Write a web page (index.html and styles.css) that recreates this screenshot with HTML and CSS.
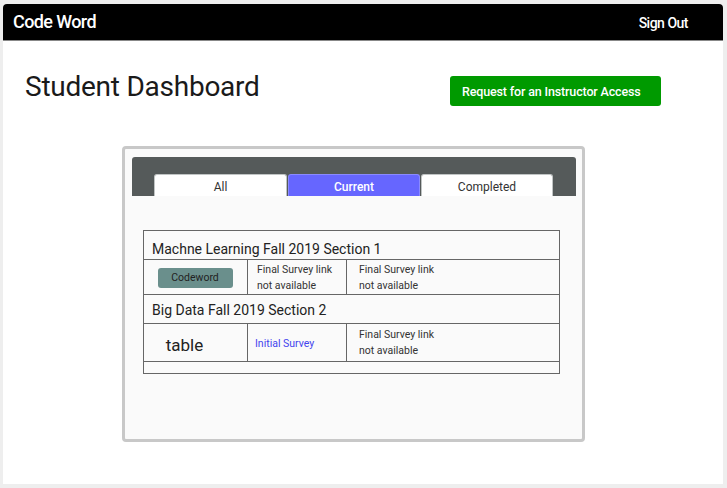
FILE: index.html
```html
<!DOCTYPE html>
<html>
<head>
<meta charset="utf-8">
<link rel="stylesheet" href="styles.css">
</head>
<body>
<div class="panel">
  <header class="topbar">
    <span class="brand">Code Word</span>
    <span class="signout">Sign Out</span>
  </header>
  <div class="titlerow">
    <h1 class="title">Student Dashboard</h1>
    <button class="request">Request for an Instructor Access</button>
  </div>
  <div class="card">
    <div class="tabbar">
      <div class="tab">All</div>
      <div class="tab active">Current</div>
      <div class="tab">Completed</div>
    </div>
    <table class="courses">
      <colgroup>
        <col class="col1">
        <col class="col2">
        <col class="col3">
      </colgroup>
      <tr class="course-title first"><td colspan="3">Machne Learning Fall 2019 Section 1</td></tr>
      <tr class="course-row r1">
        <td class="c1"><span class="codeword">Codeword</span></td>
        <td class="c2 small">Final Survey link<br>not available</td>
        <td class="c3 small">Final Survey link<br>not available</td>
      </tr>
      <tr class="course-title second"><td colspan="3">Big Data Fall 2019 Section 2</td></tr>
      <tr class="course-row r2">
        <td class="c1"><span class="tabletext">table</span></td>
        <td class="c2"><a class="link">Initial Survey</a></td>
        <td class="c3 small">Final Survey link<br>not available</td>
      </tr>
      <tr class="empty-row"><td colspan="3"></td></tr>
    </table>
  </div>
</div>
</body>
</html>
```
FILE: styles.css
```css
html, body {
  margin: 0;
  padding: 0;
}
body {
  background: #eeeeee;
  padding: 4px 4px 4px 3px;
  font-family: Roboto, "Liberation Sans", sans-serif;
  color: #222;
}
.panel {
  width: 720px;
  height: 480px;
  background: #ffffff;
  box-sizing: border-box;
  border-radius: 3px 3px 0 0;
}
.topbar {
  height: 37px;
  background: #000;
  border-radius: 4px 4px 0 0;
  border-bottom: 1px solid #888;
  box-sizing: border-box;
  display: flex;
  align-items: center;
  justify-content: space-between;
  padding: 0 35px 2px 10px;
}
.brand {
  color: #fff;
  font-size: 18px;
  font-weight: 500;
  letter-spacing: -0.6px;
}
.signout {
  color: #fff;
  font-size: 14px;
  font-weight: 500;
  letter-spacing: -0.5px;
  padding-top: 4px;
}
.titlerow {
  display: flex;
  align-items: flex-start;
  padding: 29px 0 0 22px;
}
.title {
  margin: 0;
  width: 425px;
  font-size: 28px;
  font-weight: 400;
  line-height: 34px;
  color: #1a1a1a;
  letter-spacing: -0.25px;
}
.request {
  margin-top: 6px;
  width: 211px;
  height: 30px;
  background: #009a00;
  border: none;
  border-radius: 3px;
  color: #fff;
  font-family: Roboto, "Liberation Sans", sans-serif;
  font-size: 12.5px;
  font-weight: 500;
  letter-spacing: -0.15px;
  text-align: left;
  padding: 0 0 0 12px;
}
.card {
  margin: 40px 0 0 119px;
  width: 463px;
  height: 296px;
  box-sizing: border-box;
  border: 3px solid #c8c8c8;
  border-radius: 4px;
  background: #fafafa;
  padding: 8px 6px 0 7px;
}
.tabbar {
  height: 39px;
  background: #555a5a;
  border-radius: 3px 3px 0 0;
  display: flex;
  align-items: flex-end;
  gap: 1px;
  padding-left: 22px;
  box-sizing: border-box;
}
.tab {
  width: 133px;
  height: 22px;
  box-sizing: border-box;
  background: #fff;
  border: 1px solid #c0c4c4;
  border-bottom: none;
  border-radius: 3px 3px 0 0;
  font-size: 12px;
  color: #333;
  text-align: center;
  line-height: 25px;
}
.tab + .tab {
  width: 132px;
}
.tab.active {
  background: #6666ff;
  color: #fff;
  font-weight: 500;
  border-color: #8a8aff;
}
.courses {
  margin: 34px 0 0 11px;
  width: 417px;
  table-layout: fixed;
  border-collapse: collapse;
  border: 1px solid #666;
}
.col1 { width: 104px; }
.col2 { width: 99px; }
.col3 { width: auto; }
.courses td {
  border: 1px solid #666;
  padding: 0;
  vertical-align: middle;
}
.course-title {
  height: 29px;
}
.course-title td {
  font-size: 14px;
  line-height: 16px;
  color: #222;
  padding-left: 8px;
}
.course-title.first td {
  padding-top: 7px;
}
.course-title.second td {
  padding-top: 1px;
}
.r1 {
  height: 35px;
}
.r2 {
  height: 38px;
}
.c1 {
  text-align: center;
}
.small {
  font-size: 10.5px;
  line-height: 15.5px;
  color: #333;
}
.c2.small {
  padding-left: 9px;
}
.c3.small {
  padding-left: 12px;
}
.r1 td.small {
  padding-top: 1px;
}
.codeword {
  display: inline-block;
  width: 75px;
  height: 20px;
  background: #6a8f8c;
  border-radius: 3px;
  font-size: 10.5px;
  line-height: 20px;
  color: #222;
  margin-right: 1px;
}
.tabletext {
  font-size: 17px;
  color: #222;
  margin-right: 22px;
  position: relative;
  top: 2px;
}
.r2 .c2 {
  padding-left: 7px;
  padding-bottom: 3px;
}
.link {
  font-size: 10.5px;
  color: #4444ee;
}
.empty-row {
  height: 12px;
}
```
